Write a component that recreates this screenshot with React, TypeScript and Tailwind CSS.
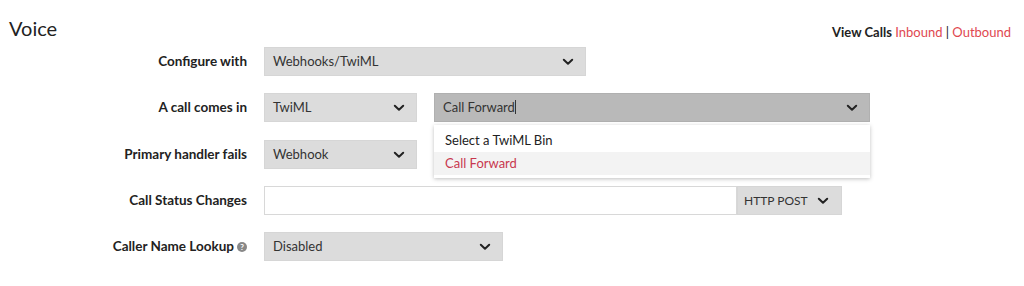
import React from 'react';

const Chevron = () => (
  <svg width="12" height="8" viewBox="0 0 12 8" className="shrink-0">
    <path d="M1.8 1.8 L6 5.8 L10.2 1.8" fill="none" stroke="#222" strokeWidth="2" strokeLinecap="round" strokeLinejoin="round" />
  </svg>
);

const Select = ({ value, width }: { value: string; width: string }) => (
  <div className={`${width} h-[29px] bg-[#dcdcdc] border border-[#d6d6d6] flex items-center justify-between pl-[8px] pr-[11px] text-[13px] text-[#333]`}>
    <span>{value}</span>
    <Chevron />
  </div>
);

const Row = ({ label, help, className = '', children }: { label: string; help?: boolean; className?: string; children: React.ReactNode }) => (
  <div className={`flex items-center h-[29px] ${className}`}>
    <div className="w-[247px] flex items-center justify-end gap-[3px] font-bold text-[13.5px] text-[#222]">
      {label}
      {help && (
        <span className="w-[10px] h-[10px] rounded-full bg-[#888] text-white text-[8px] leading-[10px] text-center font-bold">?</span>
      )}
    </div>
    <div className="ml-[17px] flex items-center">{children}</div>
  </div>
);

export default function App() {
  return (
    <div className="w-[1024px] h-[286px] bg-white font-['Lato',sans-serif] relative">
      <div className="flex justify-between items-end pl-[9px] pr-[13px] pt-[15px]">
        <h1 className="text-[20px] leading-[26px] text-[#222]">Voice</h1>
        <div className="text-[13px] leading-[18px]">
          <span className="font-bold text-[#222]">View Calls</span>{' '}
          <span className="text-[#e0484f]">Inbound</span>{' '}
          <span className="text-[#222]">|</span>{' '}
          <span className="text-[#e0484f]">Outbound</span>
        </div>
      </div>

      <div className="flex flex-col gap-[17px] mt-[6px]">
        <Row label="Configure with">
          <Select value="Webhooks/TwiML" width="w-[322px]" />
        </Row>
        <Row label="A call comes in">
          <Select value="TwiML" width="w-[153px]" />
          <div className="relative ml-[17px]">
            <div className="w-[436px] h-[29px] bg-[#b9b9b9] border border-[#b0b0b0] flex items-center justify-between pl-[8px] pr-[11px] text-[13px] text-[#333]">
              <span>
                Call Forward<span className="inline-block w-px h-[14px] bg-[#333] align-middle -mt-[2px]" />
              </span>
              <Chevron />
            </div>
            <div className="absolute left-0 top-[32px] w-[436px] bg-white shadow-[0_1px_4px_rgba(0,0,0,0.25)] pt-[5px] pb-[3px] z-10 text-[13px]">
              <div className="h-[22px] pl-[11px] flex items-center text-[#222]">Select a TwiML Bin</div>
              <div className="h-[23px] pl-[11px] flex items-center bg-[#f3f3f3] text-[#c8374f]">Call Forward</div>
            </div>
          </div>
        </Row>
        <Row label="Primary handler fails" className="mt-[1px]">
          <Select value="Webhook" width="w-[153px]" />
        </Row>
        <Row label="Call Status Changes">
          <div className="w-[473px] h-[29px] bg-white border border-[#d8d8d8]" />
          <div className="w-[105px] h-[29px] bg-[#dcdcdc] border border-[#d6d6d6] flex items-center justify-between pl-[6px] pr-[12px] text-[12px] text-[#333]">
            <span>HTTP POST</span>
            <Chevron />
          </div>
        </Row>
        <Row label="Caller Name Lookup" help>
          <Select value="Disabled" width="w-[239px]" />
        </Row>
      </div>
    </div>
  );
}
